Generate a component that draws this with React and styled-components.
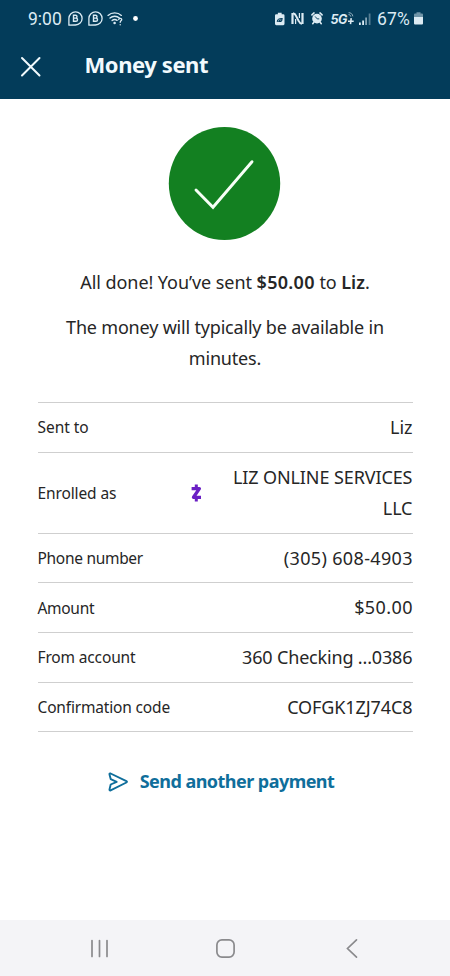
import React from 'react';
import styled, { createGlobalStyle } from 'styled-components';

const Global = createGlobalStyle`
  * { box-sizing: border-box; }
  body { margin: 0; background: #fff; }
`;

const Screen = styled.div`
  width: 450px;
  height: 976px;
  display: flex;
  flex-direction: column;
  background: #fff;
  color: #262626;
  font-family: "Noto Sans", "Open Sans", sans-serif;
  overflow: hidden;
`;

const Header = styled.header`
  height: 99px;
  flex: none;
  background: #033c5a;
  color: #f2fafd;
`;

const StatusBar = styled.div`
  height: 37px;
  display: flex;
  align-items: center;
  justify-content: space-between;
  padding: 0 27.5px 0 28px;
  font-family: Roboto, sans-serif;
  font-size: 17.5px;
  color: #dcebf3;
`;

const StatusGroup = styled.div`
  display: flex;
  align-items: center;
`;

const StatusText = styled.span`
  line-height: 20px;
  letter-spacing: ${(p) => p.$spacing || 0}px;
`;

const Glyph = styled.svg`
  display: block;
  flex: none;
  overflow: visible;
  margin-left: ${(p) => p.$gap || 0}px;
`;

const TitleBar = styled.div`
  height: 58px;
  display: flex;
  align-items: center;
  padding-left: 20px;
`;

const IconButton = styled.button`
  display: flex;
  padding: 0;
  border: 0;
  background: none;
  color: inherit;
`;

const Title = styled.h1`
  margin: 0 0 5px 43.5px;
  font-size: 22px;
  line-height: 30px;
  font-weight: 700;
  letter-spacing: -0.42px;
`;

const Content = styled.main`
  flex: 1;
  display: flex;
  flex-direction: column;
  align-items: center;
  padding: 28px 37.5px 0;
`;

const Message = styled.p`
  margin: ${(p) => p.$top}px 0 0;
  width: 340px;
  text-align: center;
  font-size: 18px;
  line-height: 31px;
  letter-spacing: ${(p) => p.$spacing || 0}px;
`;

const Strong = styled.b`
  font-weight: 600;
  letter-spacing: ${(p) => p.$spacing || 0}px;
`;

const Details = styled.dl`
  width: 375px;
  margin: 28px 0 0;
  border-top: 1px solid #cfcfcf;
`;

const Row = styled.div`
  height: ${(p) => (p.$tall ? 81 : 49.7)}px;
  display: flex;
  align-items: center;
  border-bottom: 1px solid #cfcfcf;
`;

const Label = styled.dt`
  flex: 1;
  font-size: 15.5px;
  line-height: 24px;
  letter-spacing: ${(p) => p.$spacing || 0}px;
`;

const Value = styled.dd`
  margin: 0;
  width: ${(p) => (p.$wrap ? '186px' : 'auto')};
  text-align: right;
  font-size: 18px;
  line-height: 31px;
  margin-left: ${(p) => (p.$wrap ? 24 : 0)}px;
  margin-right: ${(p) => -(p.$spacing || 0)}px;
  letter-spacing: ${(p) => p.$spacing || 0}px;
`;

const SendAgain = styled.button`
  display: flex;
  align-items: center;
  gap: 12px;
  margin: 34px 0 0 -8px;
  padding: 0;
  border: 0;
  background: none;
  color: #0f6e9b;
  font-family: inherit;
  font-size: 18px;
  font-weight: 700;
  line-height: 31px;
  letter-spacing: -0.54px;
`;

const NavBar = styled.nav`
  height: 56px;
  flex: none;
  display: grid;
  grid-template-columns: 126px 131px 12px;
  align-items: center;
  padding: 1px 0 0 90px;
  background: #f4f4f7;
  color: #8a8a8d;
`;

const ChatBadge = ({ gap }) => (
  <Glyph $gap={gap} width="15" height="15" viewBox="0 0 15 15" fill="none" stroke="currentColor" strokeWidth="1.3">
    <path d="M.9 14.2V7.3a6.6 6.6 0 1 1 6.6 6.7Z" strokeLinejoin="round" />
    <path d="M5.500 4.300v6h2.400a1.600 1.600 0 0 0 0-3.200H5.500h2.100a1.400 1.400 0 0 0 0-2.800Z" strokeWidth="1.4" />
  </Glyph>
);

const WifiIcon = () => (
  <Glyph $gap={4} width="17" height="15" viewBox="0 0 17 15" fill="none" stroke="currentColor" strokeWidth="1.35" strokeLinecap="round">
    <path d="M1 4.400a10 10 0 0 1 13.400 0M3 7.100a7 7 0 0 1 9.400 0M5.100 9.600a4 4 0 0 1 5-.2" />
    <path d="M11.700 8.500c.2-1.700 3.200-1.500 3 .2-.1 1.200-1.500 1.200-1.500 2.600M13.200 13.700v.1" />
    <circle cx="7.6" cy="11.9" r=".6" fill="currentColor" />
  </Glyph>
);

const BatterySaverIcon = () => (
  <Glyph width="9.5" height="14" viewBox="0 0 10 14">
    <path fill="currentColor" d="M3 .4h4v1.500h1.500A1.400 1.400 0 0 1 10 3.300v8.800a1.400 1.400 0 0 1-1.500 1.400h-7A1.400 1.400 0 0 1 0 12.100V3.300a1.400 1.400 0 0 1 1.500-1.400H3Z" />
    <path fill="none" stroke="#033c5a" strokeWidth="1.1" d="M2.300 10c.3-3.200 2-3.400 5.200-3.400-.2 3-1.500 3.600-3.700 2.700l2-1.200" />
  </Glyph>
);

const NfcIcon = () => (
  <Glyph $gap={7} width="13" height="13" viewBox="0 0 13 13" fill="none" stroke="currentColor" strokeLinejoin="round">
    <path strokeWidth="2.2" d="M1.500 1v11M11.500 1v11" />
    <path strokeWidth="1.9" d="M2 1.200c2 .3 2.600 1.500 3.200 3l2.600 5c.5 1.200 1.500 2.400 3.200 2.600" />
    <path strokeWidth="1.200" d="M4.600 12V7M8.400 1v5" />
  </Glyph>
);

const AlarmIcon = () => (
  <Glyph $gap={7} width="12" height="13" viewBox="0 0 12 14">
    <circle cx="6" cy="7.2" r="5.2" fill="currentColor" />
    <path d="M.5 3.100 2.800 1M11.500 3.100 9.200 1M2.600 11l-1.200 1.600M9.400 11l1.200 1.600" stroke="currentColor" strokeWidth="1.700" strokeLinecap="round" />
    <path d="M4 4.800 6.200 7.400H8.400" fill="none" stroke="#033c5a" strokeWidth="1" />
  </Glyph>
);

const NetworkLabel = styled.span`
  margin-left: 7px;
  width: 18px;
  font-family: Inter, sans-serif;
  font-size: 12.5px;
  line-height: 16px;
  font-weight: 700;
  font-style: italic;
  letter-spacing: -0.3px;
  padding-top: 3px;
`;

const NetworkPlus = () => (
  <Glyph width="6" height="15" viewBox="0 0 6 15" fill="none" stroke="currentColor">
    <path strokeWidth="1.600" d="M0 10.200h5.700M3.200 7.200l-.7 6" />
    <path strokeWidth=".9" d="M.6 1.700c2.200-.1 4 1.400 4.200 3.600M.5 3.600c1.200 0 2.200.8 2.300 2" opacity=".75" />
  </Glyph>
);

const SignalIcon = () => (
  <Glyph $gap={5} width="12" height="14" viewBox="0 0 12 14" fill="currentColor">
    <path d="M0 10.500h1.800V13H0ZM3.200 8.500H5V13H3.200Z" />
    <path d="M6.200 5.500H8V13H6.200Z" opacity=".6" />
    <path d="M9.700 1.500h1.800V13H9.700Z" opacity=".38" />
  </Glyph>
);

const BatteryIcon = () => (
  <Glyph $gap={3.5} width="9" height="13" viewBox="0 0 9 13" fill="currentColor">
    <path d="M2.500.2h4v1.300H8A1 1 0 0 1 9 2.500V5H0V2.500a1 1 0 0 1 1-1h1.500Z" opacity=".5" />
    <path d="M0 5h9v6.500a1 1 0 0 1-1 1H1a1 1 0 0 1-1-1Z" />
  </Glyph>
);

const CloseIcon = () => (
  <Glyph width="21" height="21" viewBox="0 0 21 21" fill="none" stroke="currentColor" strokeWidth="2" strokeLinecap="round">
    <path d="m2 2 17.500 17.500M19.500 2 2 19.500" />
  </Glyph>
);

const SuccessIcon = () => (
  <Glyph width="112" height="114" viewBox="0 0 112 114">
    <ellipse cx="55.500" cy="56.500" rx="55.700" ry="56.500" fill="#138021" />
    <path d="m27 63 17 17.300 39-45.600" fill="none" stroke="#f7fff7" strokeWidth="2.900" strokeLinecap="round" />
  </Glyph>
);

const ZelleIcon = () => (
  <Glyph width="11" height="18" viewBox="0 0 11 18" fill="none" stroke="#6a1fc4" strokeWidth="3.3" strokeLinejoin="round">
    <path d="M.6 4.600h7.800L2.500 13.300h7.500" />
    <path d="M5.300.5V4M5.300 14v3.600" strokeWidth="3" />
  </Glyph>
);

const SendIcon = () => (
  <Glyph width="20" height="20" viewBox="0 0 20 20" fill="none" stroke="currentColor" strokeWidth="1.9" strokeLinejoin="round">
    <path d="M1.500 2.500c-.2-.9.3-1.300 1.100-1L18.400 9.100q1.200.7 0 1.400L2.600 18.300c-.8.400-1.300 0-1.100-.9l1.200-4.900 6-2.700-6-2.700Z" />
  </Glyph>
);

const ROWS = [
  { label: 'Sent to', value: 'Liz', ls: -0.05, vs: 0 },
  { label: 'Enrolled as', value: 'LIZ ONLINE SERVICES LLC', ls: -0.12, vs: -0.1, wrap: true },
  { label: 'Phone number', value: '(305) 608-4903', ls: -0.3, vs: 0.34 },
  { label: 'Amount', value: '$50.00', ls: -0.3, vs: 0.4 },
  { label: 'From account', value: '360 Checking ...0386', ls: -0.15, vs: -0.17 },
  { label: 'Confirmation code', value: 'COFGK1ZJ74C8', ls: -0.17, vs: -0.1 },
];

export default function App() {
  return (
    <Screen>
      <Global />
      <Header>
        <StatusBar>
          <StatusGroup>
            <StatusText>9:00</StatusText>
            <ChatBadge gap={6} />
            <ChatBadge gap={5} />
            <WifiIcon />
            <Glyph $gap={9} width="5" height="5" viewBox="0 0 5 5">
              <circle cx="2.500" cy="2.500" r="2.400" fill="#fff" />
            </Glyph>
          </StatusGroup>
          <StatusGroup>
            <BatterySaverIcon />
            <NfcIcon />
            <AlarmIcon />
            <NetworkLabel>5G</NetworkLabel>
            <NetworkPlus />
            <SignalIcon />
            <Glyph width="5.5" height="1" />
            <StatusText $spacing={0.2}>67%</StatusText>
            <BatteryIcon />
          </StatusGroup>
        </StatusBar>
        <TitleBar>
          <IconButton aria-label="Close"><CloseIcon /></IconButton>
          <Title>Money sent</Title>
        </TitleBar>
      </Header>
      <Content>
        <SuccessIcon />
        <Message $top={26} $spacing={-0.07}>
          All done! You’ve sent <Strong $spacing={0.3}>$50.00</Strong> to <Strong>Liz</Strong>.
        </Message>
        <Message $top={14} $spacing={-0.19}>
          The money will typically be available in minutes.
        </Message>
        <Details>
          {ROWS.map((r) => (
            <Row key={r.label} $tall={r.wrap}>
              <Label $spacing={r.ls}>{r.label}</Label>
              {r.wrap && <ZelleIcon />}
              <Value $spacing={r.vs} $wrap={r.wrap}>{r.value}</Value>
            </Row>
          ))}
        </Details>
        <SendAgain>
          <SendIcon />
          Send another payment
        </SendAgain>
      </Content>
      <NavBar>
        <Glyph width="19" height="19" viewBox="0 0 19 19" stroke="currentColor" strokeWidth="1.700" strokeLinecap="round">
          <path d="M2 1.500v16M9.500 1.500v16M17 1.500v16" />
        </Glyph>
        <Glyph width="19" height="19" viewBox="0 0 19 19" fill="none" stroke="currentColor" strokeWidth="1.700">
          <rect x=".9" y=".9" width="17.200" height="17.200" rx="5" />
        </Glyph>
        <Glyph width="12" height="19" viewBox="0 0 12 19" fill="none" stroke="currentColor" strokeWidth="1.700" strokeLinecap="round">
          <path d="M9.500.9.500 9.500l9 8.600" />
        </Glyph>
      </NavBar>
    </Screen>
  );
}
